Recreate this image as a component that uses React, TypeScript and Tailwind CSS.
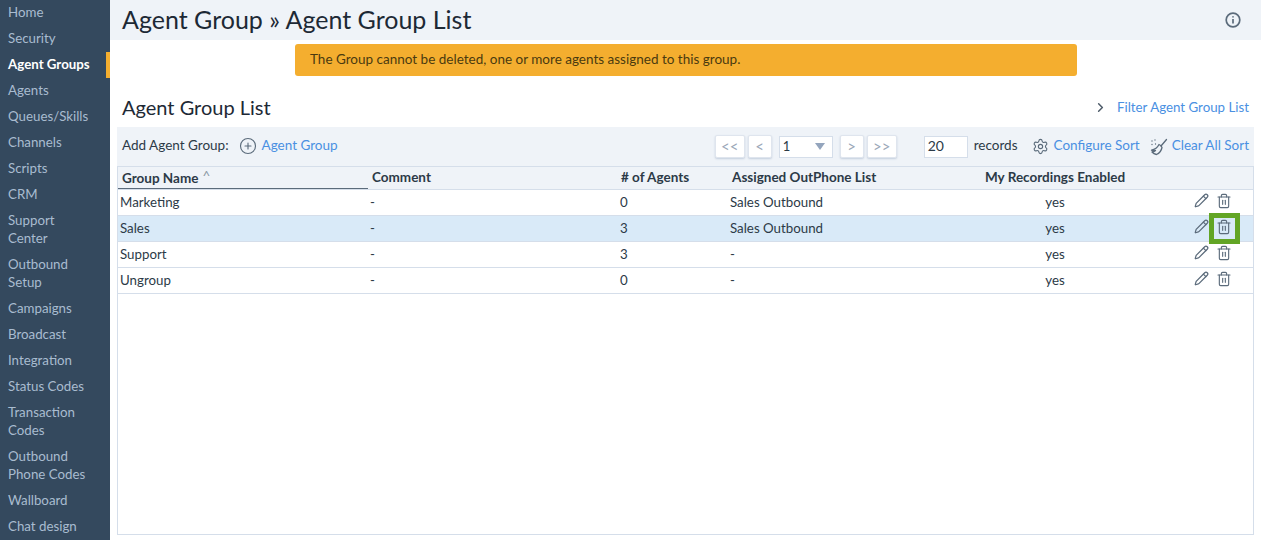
import React from "react";
import { Pencil, Trash2, ChevronRight, CirclePlus, Settings } from "lucide-react";

const nav: [string, boolean?][] = [
  ["Home"], ["Security"], ["Agent Groups", true], ["Agents"], ["Queues/Skills"], ["Channels"], ["Scripts"], ["CRM"],
  ["Support Center"], ["Outbound Setup"], ["Campaigns"], ["Broadcast"], ["Integration"], ["Status Codes"],
  ["Transaction Codes"], ["Outbound Phone Codes"], ["Wallboard"], ["Chat design"],
];

const rows = [
  ["Marketing", "-", "0", "Sales Outbound"],
  ["Sales", "-", "3", "Sales Outbound"],
  ["Support", "-", "3", "-"],
  ["Ungroup", "-", "0", "-"],
];

function Pager({ label, w }: { label: string; w: string }) {
  return (
    <button className={`${w} h-[23px] bg-white border border-[#dfe5ee] rounded-[2px] shadow-[0_1px_2px_#c3cede] text-[#9aa7b8] text-[15px] leading-none flex items-center justify-center`}>
      {label}
    </button>
  );
}

function Broom() {
  return (
    <svg width="18" height="18" viewBox="0 0 18 18" fill="none" stroke="#5b6b7b" strokeWidth="1.3" strokeLinecap="round" strokeLinejoin="round">
      <path d="M16.5 1.5 11 8" />
      <path d="M9 6.500c1 .3 2.600 1.600 3 3-.6 3-2.600 5.800-5.500 7-1.500-.3-3.200-1-4.500-2.500 1.500 0 2.800-.7 3.500-1.500-1.300.4-2.700.3-4-.3C4.500 11.500 7.500 9.500 9 6.500Z" />
      <path d="M2 3h.01M5 2v.01M2 6.500h.01M5.500 6h.01" />
    </svg>
  );
}

function InfoIcon() {
  return (
    <svg width="16" height="16" viewBox="0 0 16 16" fill="none" stroke="#5b6b7b" strokeWidth="1.700">
      <circle cx="8" cy="8" r="6.800" />
      <path d="M8 7v4.500" />
      <path d="M8 4.200v1.400" />
    </svg>
  );
}

export default function App() {
  return (
    <div className="flex w-[1261px] h-[540px] overflow-hidden bg-white text-[13.500px] text-[#2c3a47]" style={{ fontFamily: 'Lato, "Noto Sans", sans-serif' }}>
      <aside className="w-[110px] shrink-0 bg-[#34495e] text-[#a9bcd0] text-[13.300px] leading-[18px]">
        {nav.map(([t, active]) => (
          <div key={t} className={`pl-2 pt-[3px] pb-[5px] ${active ? "pr-0 whitespace-nowrap text-white font-bold border-r-[4px] border-[#f4ae2f]" : "pr-[20px]"}`}>
            {t}
          </div>
        ))}
      </aside>
      <main className="flex-1 min-w-0 flex flex-col">
        <header className="h-10 shrink-0 bg-[#eff3f8] flex items-center justify-between pl-3 pr-[20px] pb-[1px]">
          <h1 className="text-[25px] text-[#1d2935] leading-none">Agent Group » Agent Group List</h1>
          <InfoIcon />
        </header>
        <div className="mt-1 ml-[185px] w-[782px] h-8 shrink-0 bg-[#f4ae2f] rounded-[3px] flex items-center pl-[15px] pb-[2px] text-[13.500px] text-[#4a3a10]">
          The Group cannot be deleted, one or more agents assigned to this group.
        </div>
        <div className="mt-[20px] h-[23px] shrink-0 flex items-center justify-between pl-3 pr-3">
          <h2 className="text-[20px] text-[#1d2935] leading-none -mt-[2px]">Agent Group List</h2>
          <div className="flex items-center gap-[9px] text-[#4a90e2] text-[13.300px]">
            <ChevronRight size={15} strokeWidth={2.4} className="text-[#4d5b69]" />
            <span>Filter Agent Group List</span>
          </div>
        </div>
        <div className="mt-2 mx-[7px] h-[39px] shrink-0 bg-[#eff3f8] flex items-center pl-[5px] pr-[5px] text-[13.500px]">
          <span className="-mt-[3px]">Add Agent Group:</span>
          <CirclePlus size={18} strokeWidth={1.5} className="ml-[10px] -mt-[1px] text-[#5b6b7b]" />
          <span className="ml-[5px] -mt-[3px] text-[#4a90e2]">Agent Group</span>
          <div className="ml-auto flex items-center">
            <div className="flex items-center gap-[3px]">
              <Pager label="<<" w="w-[30px]" />
              <Pager label="<" w="w-[24px]" />
            </div>
            <div className="ml-[7px] w-[54px] h-[22px] bg-white border border-[#d5deea] flex items-center justify-between pl-[3px] pr-[7px] text-[13px]">
              <span>1</span>
              <svg width="10" height="7" viewBox="0 0 10 7"><path d="M0 0h10L5 7z" fill="#94a5bd" /></svg>
            </div>
            <div className="ml-[7px] flex items-center gap-[3px]">
              <Pager label=">" w="w-[24px]" />
              <Pager label=">>" w="w-[30px]" />
            </div>
            <div className="ml-[27px] w-[44px] h-[22px] bg-white border border-[#d5deea] flex items-center pl-[3px] pb-[2px] text-[14px]">20</div>
            <span className="ml-[6px] -mt-[3px]">records</span>
            <Settings size={17} strokeWidth={1.6} className="ml-[14px] text-[#5b6b7b]" />
            <span className="ml-[5px] -mt-[3px] text-[#4a90e2]">Configure Sort</span>
            <span className="ml-[10px]"><Broom /></span>
            <span className="ml-[4px] -mt-[3px] text-[#4a90e2]">Clear All Sort</span>
          </div>
        </div>
        <div className="mx-[7px] mb-[5px] flex-1 border border-[#d5deea] text-[13.300px]">
          <div className="relative h-[23px] bg-[#eff3f8] border-b border-[#d5deea] flex items-center pb-[1px] font-bold text-[13.500px]">
            <div className="w-[250px] pl-1 h-full flex items-center border-b border-[#5b6b7b] -mb-[2px]">
              Group Name <span className="ml-1 -mt-1 text-[#8a97a5] font-normal">^</span>
            </div>
            <div className="w-[250px] pl-1">Comment</div>
            <div className="w-[110px] pl-[3px]"># of Agents</div>
            <div className="w-[253px] pl-[4px]">Assigned OutPhone List</div>
            <div className="pl-[4px]">My Recordings Enabled</div>
          </div>
          {rows.map((r, i) => (
            <div key={r[0]} className={`h-[26px] flex items-center border-b border-[#d5deea] ${i === 1 ? "bg-[#d9eaf8]" : ""}`}>
              <div className="w-[250px] pl-[2px]">{r[0]}</div>
              <div className="w-[250px] pl-[2px]">{r[1]}</div>
              <div className="w-[110px] pl-[2px]">{r[2]}</div>
              <div className="w-[253px] pl-[2px]">{r[3]}</div>
              <div className="w-[148px] text-center">yes</div>
              <div className="relative ml-[65px] flex items-center gap-[7px] text-[#5b6b7b] -mt-[4px]">
                <Pencil size={15} strokeWidth={2} />
                <span className="relative">
                  <Trash2 size={16} strokeWidth={1.7} className="block" />
                  {i === 1 && <span className="absolute -left-[7px] -top-[6px] w-[31px] h-[31px] border-[5px] border-[#62a525]" />}
                </span>
              </div>
            </div>
          ))}
        </div>
      </main>
    </div>
  );
}
